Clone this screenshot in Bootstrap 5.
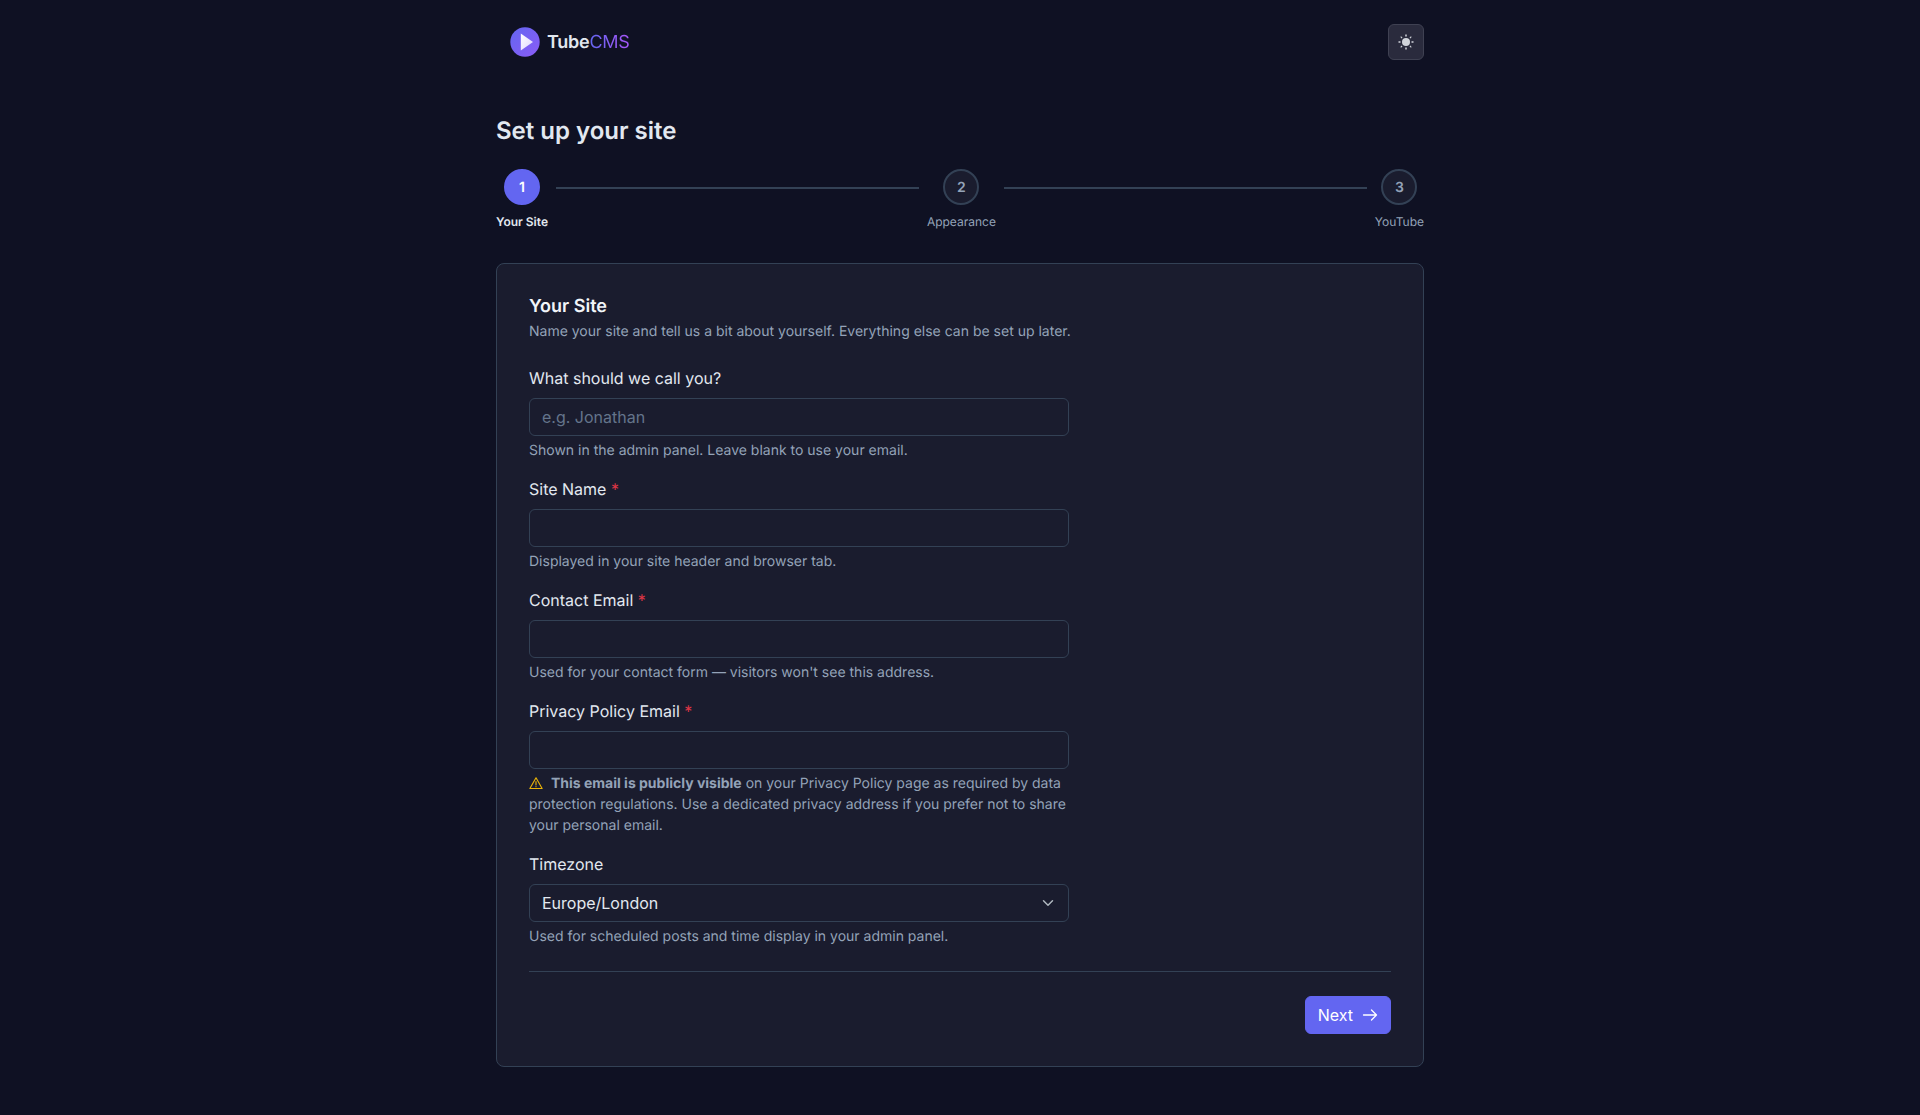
<!DOCTYPE html>
<html lang="en" data-bs-theme="dark">
<head>
<meta charset="utf-8">
<title>Set up your site</title>
<link href="https://cdn.jsdelivr.net/npm/bootstrap@5.3.0/dist/css/bootstrap.min.css" rel="stylesheet">
<style>
:root{--pg:#0f1123;--panel:#1a1c2e;--line:#334155;--ink:#e2e8f0;--mute:#94a3b8;--brand:#6366f1}
html,body{background:var(--pg)}
body{font-family:Inter,"Liberation Sans",sans-serif;color:var(--ink);min-height:1115px;font-size:16px;text-rendering:geometricPrecision}
.shell{width:928px;margin:0 auto}
.top-bar{height:84px;padding:0 0 0 14px}
.logo-text{font-size:18px;font-weight:600;letter-spacing:-.25px;color:var(--ink);margin-left:7px}
.logo-text span{font-weight:400;background:linear-gradient(90deg,#6366f1,#a855f7);-webkit-background-clip:text;background-clip:text;color:transparent}
.theme-btn{width:36px;height:36px;padding:0;background:#2a2b3d;border:1px solid #3f4152;border-radius:6px;color:#d1d5db}
.page-title{font-size:24px;font-weight:600;line-height:36px;margin:29px 0 20px;color:var(--ink)}
.step-item{width:auto}
.step-dot{width:36px;height:36px;border-radius:50%;border:2px solid var(--line);background:var(--panel);color:var(--mute);font-size:14px;font-weight:600}
.step-dot.on{background:var(--brand);border-color:var(--brand);color:#fff}
.step-name{font-size:12px;line-height:18px;margin-top:8px;color:var(--mute);white-space:nowrap}
.step-name.on{color:var(--ink);font-weight:600}
.step-link{flex:1;height:2px;background:var(--line);margin:18px 8px 0}
.form-panel{background:var(--panel);border:1px solid var(--line);border-radius:8px;padding:32px;margin-top:32px}
.panel-title{font-size:18px;font-weight:600;line-height:22px;margin:0 0 3px;color:#f1f5f9}
.panel-sub{font-size:14px;line-height:21px;color:var(--mute);margin:0 0 24px}
.form-col{width:540px}
.field{margin-bottom:16px}
.field .form-label{font-size:16px;line-height:24px;font-weight:400;margin-bottom:8px;color:var(--ink)}
.req{color:#dc3545}
.field .form-control,.field .form-select{height:38px;background-color:var(--panel);border:1px solid var(--line);color:var(--ink);font-size:16px;border-radius:6px;padding:6px 12px}
.field .form-select{padding-right:36px}
.field .form-control::placeholder{color:#64748b}
.field .form-text{font-size:14px;line-height:21px;color:var(--mute);margin-top:4px}
.field .form-text strong{font-weight:700}
.warn-ico{vertical-align:-2px;margin-right:4px}
.panel-rule{border:0;border-top:1px solid var(--line);opacity:1;margin:24px 0}
.next-btn{--bs-btn-bg:var(--brand);--bs-btn-border-color:var(--brand);--bs-btn-hover-bg:#4f46e5;--bs-btn-hover-border-color:#4f46e5;font-size:16px;font-weight:400;height:38px;border-radius:6px;padding:6px 12px;gap:9px}
</style>
</head>
<body>
<div class="shell">
  <header class="top-bar d-flex align-items-center justify-content-between">
    <a href="#" class="d-flex align-items-center text-decoration-none">
      <svg width="30" height="30" viewBox="0 0 30 30" aria-hidden="true">
        <defs>
          <linearGradient id="lg" x1="0" y1="0" x2="1" y2="1"><stop offset="0" stop-color="#6366f1"/><stop offset="1" stop-color="#8b5cf6"/></linearGradient>
          <linearGradient id="lp" x1="0" y1="0" x2="1" y2="1"><stop offset="0" stop-color="#ffffff"/><stop offset="1" stop-color="#ddd6fe"/></linearGradient>
        </defs>
        <circle cx="15" cy="15" r="14.700" fill="url(#lg)"/>
        <path d="M10.800 6.500 23 15 10.800 23.500Z" fill="url(#lp)"/>
      </svg>
      <span class="logo-text">Tube<span>CMS</span></span>
    </a>
    <button type="button" class="btn theme-btn d-flex align-items-center justify-content-center" aria-label="Toggle theme">
      <svg width="16" height="16" viewBox="0 0 16 16" fill="currentColor" aria-hidden="true">
        <circle cx="8" cy="8" r="4"/>
        <path d="M8 .5V2.500M8 13.500V15.500M.5 8H2.500M13.500 8H15.500" stroke="currentColor" stroke-width="1.500"/>
        <path d="M2.700 2.700 4.100 4.100M11.900 11.900 13.300 13.300M2.700 13.300 4.100 11.900M11.900 4.100 13.300 2.700" stroke="currentColor" stroke-width="1.100"/>
      </svg>
    </button>
  </header>

  <h1 class="page-title">Set up your site</h1>

  <div class="d-flex align-items-start">
    <div class="step-item d-flex flex-column align-items-center">
      <div class="step-dot on d-flex align-items-center justify-content-center">1</div>
      <div class="step-name on">Your Site</div>
    </div>
    <div class="step-link"></div>
    <div class="step-item d-flex flex-column align-items-center">
      <div class="step-dot d-flex align-items-center justify-content-center">2</div>
      <div class="step-name">Appearance</div>
    </div>
    <div class="step-link"></div>
    <div class="step-item d-flex flex-column align-items-center">
      <div class="step-dot d-flex align-items-center justify-content-center">3</div>
      <div class="step-name">YouTube</div>
    </div>
  </div>

  <form class="form-panel">
    <h2 class="panel-title">Your Site</h2>
    <p class="panel-sub">Name your site and tell us a bit about yourself. Everything else can be set up later.</p>
    <div class="form-col">
      <div class="field">
        <label class="form-label" for="f1">What should we call you?</label>
        <input class="form-control" id="f1" type="text" placeholder="e.g. Jonathan">
        <div class="form-text">Shown in the admin panel. Leave blank to use your email.</div>
      </div>
      <div class="field">
        <label class="form-label" for="f2">Site Name <span class="req">*</span></label>
        <input class="form-control" id="f2" type="text">
        <div class="form-text">Displayed in your site header and browser tab.</div>
      </div>
      <div class="field">
        <label class="form-label" for="f3">Contact Email <span class="req">*</span></label>
        <input class="form-control" id="f3" type="email">
        <div class="form-text">Used for your contact form — visitors won't see this address.</div>
      </div>
      <div class="field">
        <label class="form-label" for="f4">Privacy Policy Email <span class="req">*</span></label>
        <input class="form-control" id="f4" type="email">
        <div class="form-text">
          <svg class="warn-ico" width="14" height="14" viewBox="0 0 16 16" fill="none" stroke="#eab308" stroke-width="1.300" stroke-linejoin="round" stroke-linecap="round" aria-hidden="true"><path d="M8 2 15 14.300H1Z"/><path d="M8 6.500V10.200M8 12.100V12.200"/></svg>
          <strong>This email is publicly visible</strong> on your Privacy Policy page as required by data protection regulations. Use a dedicated privacy address if you prefer not to share your personal email.
        </div>
      </div>
      <div class="field">
        <label class="form-label" for="f5">Timezone</label>
        <select class="form-select" id="f5"><option>Europe/London</option></select>
        <div class="form-text">Used for scheduled posts and time display in your admin panel.</div>
      </div>
    </div>
    <hr class="panel-rule">
    <div class="d-flex justify-content-end">
      <button type="button" class="btn btn-primary next-btn d-inline-flex align-items-center">Next
        <svg width="16" height="16" viewBox="0 0 16 16" fill="none" stroke="currentColor" stroke-width="1.300" stroke-linecap="round" stroke-linejoin="round" aria-hidden="true"><path d="M1.500 8H14.500M9.500 3 14.500 8 9.500 13"/></svg>
      </button>
    </div>
  </form>
</div>
</body>
</html>
